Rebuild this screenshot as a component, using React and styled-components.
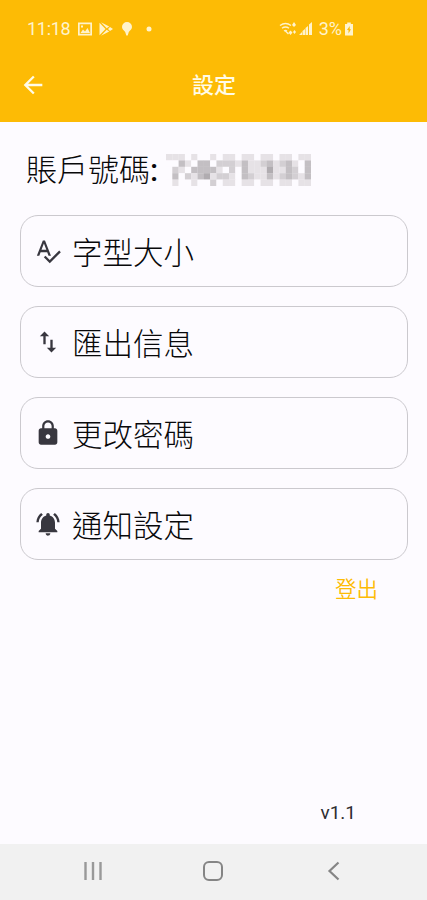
import styled, { createGlobalStyle } from "styled-components";

const GlobalStyle = createGlobalStyle`
  * {
    box-sizing: border-box;
  }

  body {
    margin: 0;
    background: #fdfbff;
    font-family: Roboto, "Noto Sans CJK TC", sans-serif;
  }
`;

const Screen = styled.div`
  width: 427px;
  height: 900px;
  display: flex;
  flex-direction: column;
  background: #fdfbff;
  color: #08080a;
  overflow: hidden;
`;

const Header = styled.header`
  height: 122px;
  background: #fdbb05;
  color: #fffbe8;
`;

const StatusBar = styled.div`
  height: 48px;
  padding: 9px 71px 0 27px;
  display: flex;
  align-items: center;
  justify-content: space-between;
  color: #fff3cc;
  font-size: 18px;
`;

const StatusGroup = styled.div`
  display: flex;
  align-items: center;
`;

const Clock = styled.span`
  width: 50px;
  letter-spacing: -0.3px;
`;

const Battery = styled.span`
  margin: 0 0 0 5px;
`;

const AppBar = styled.div`
  height: 72px;
  padding: 0 22px;
  display: grid;
  grid-template-columns: 44px 1fr 44px;
  align-items: center;
`;

const Title = styled.h1`
  margin: 2px 0 0 1px;
  font-size: 22px;
  font-weight: 500;
  line-height: 72px;
  text-align: center;
`;

const Content = styled.main`
  flex: 1;
  padding: 24px 19px 0 20px;
  display: flex;
  flex-direction: column;
`;

const Account = styled.div`
  height: 48px;
  padding-left: 6px;
  display: flex;
  align-items: center;
  font-size: 31px;
  font-weight: 300;
  line-height: 48px;
`;

const AccountLabel = styled.span`
  padding-top: 2px;
`;

const Colon = styled.span`
  font-weight: 500;
`;

const Menu = styled.div`
  margin-top: 21px;
  display: flex;
  flex-direction: column;
  gap: 19px;
`;

const MenuItem = styled.button`
  height: 72px;
  padding: 0 0 0 13px;
  display: flex;
  align-items: center;
  gap: 10px;
  border: 1px solid #cbc9ce;
  border-radius: 18px;
  background: transparent;
  color: #08080a;
  font-family: inherit;
  font-size: 30.5px;
  font-weight: 300;
`;

const MenuLabel = styled.span`
  padding-bottom: 1px;
`;

const Logout = styled.button`
  align-self: flex-end;
  height: 40px;
  margin: 7px 30px 0 0;
  padding: 0;
  border: none;
  background: transparent;
  color: #fdbb05;
  font-family: inherit;
  font-size: 21.5px;
  font-weight: 350;
`;

const Version = styled.div`
  align-self: flex-end;
  margin: auto 52px 19px 0;
  color: #2d2d31;
  font-size: 19px;
  line-height: 24px;
`;

const NavBar = styled.nav`
  height: 56px;
  padding: 0 33px 2px;
  display: grid;
  grid-template-columns: repeat(3, 1fr);
  place-items: center;
  background: #f1f1f1;
`;

const Icon = styled.svg`
  display: block;
  flex: none;
  width: ${(props) => props.$size || 28}px;
  height: ${(props) => props.$size || 28}px;
  margin-left: ${(props) => props.$left || 0}px;
  fill: ${(props) => props.$fill || "currentColor"};
`;

const Mosaic = styled.svg`
  display: block;
  margin-left: 8px;
`;

// one digit per tile, darker as it grows
const tiles = [
  "11101001011011011011011",
  "00310330222131123123103",
  "02103333102031114113203",
  "03021341221032113123213",
  "01001002011011011011011",
];
const shades = ["#fdfbff", "#e6e2e6", "#d3cfd3", "#c3bfc3", "#b0acb0"];

const HiddenNumber = () => (
  <Mosaic width="145" height="32" viewBox="0 0 23 5" preserveAspectRatio="none">
    {tiles.flatMap((row, y) =>
      [...row].map((level, x) => (
        <rect
          key={`${x}-${y}`}
          x={x}
          y={y}
          width="1.02"
          height="1.02"
          fill={shades[level]}
        />
      ))
    )}
  </Mosaic>
);

const menuItems = [
  {
    label: "字型大小",
    path: "M12.45 16h2.09L9.43 3H7.57L2.46 16h2.09l1.12-3h5.64l1.14 3zm-6.02-5L8.5 5.48 10.57 11H6.43zm15.16.59l-8.09 8.09L9.83 16l-1.41 1.41 5.09 5.09L23 13l-1.41-1.41z",
  },
  {
    label: "匯出信息",
    path: "M16 17.01V10h-2v7.01h-3L15 21l4-3.99h-3zM9 3L5 6.99h3V14h2V6.99h3L9 3z",
  },
  {
    label: "更改密碼",
    path: "M18 8h-1V6c0-2.76-2.24-5-5-5S7 3.24 7 6v2H6c-1.1 0-2 .9-2 2v10c0 1.1.9 2 2 2h12c1.1 0 2-.9 2-2V10c0-1.1-.9-2-2-2zm-6 9c-1.1 0-2-.9-2-2s.9-2 2-2 2 .9 2 2-.9 2-2 2zm3.1-9H8.9V6c0-1.71 1.39-3.1 3.1-3.1s3.1 1.39 3.1 3.1v2z",
  },
  {
    label: "通知設定",
    path: "M7.58 4.08L6.15 2.65C3.75 4.48 2.17 7.3 2.03 10.5h2c.15-2.65 1.51-4.97 3.55-6.42zm12.39 6.42h2c-.15-3.2-1.73-6.02-4.12-7.85l-1.42 1.43c2.02 1.45 3.39 3.77 3.54 6.42zM18 11c0-3.07-1.64-5.64-4.5-6.32V4c0-.83-.67-1.5-1.5-1.5s-1.5.67-1.5 1.5v.68C7.63 5.36 6 7.92 6 11v5l-2 2v1h16v-1l-2-2v-5zm-6 11c.14 0 .27-.01.4-.04.65-.14 1.18-.58 1.44-1.18.1-.24.15-.5.15-.78h-4c.01 1.1.9 2 2.01 2z",
  },
];

const App = () => (
  <Screen>
    <GlobalStyle />
    <Header>
      <StatusBar>
        <StatusGroup>
          <Clock>11:18</Clock>
          <Icon viewBox="0 0 16 16" $size={16}>
            <path
              fillRule="evenodd"
              d="M1 1.5h14v13H1zM2.7 3.2v9.6h10.6V3.2zM3.5 12l2.5-3.5 2 2 2.5-3.5 2.5 5zM4 4.5h2v2H4z"
            />
          </Icon>
          <Icon viewBox="0 0 16 16" $size={16} $left={5}>
            <path d="M1.5 1.8l6 6.2-6 6.2zM3 1.3L11.2 5.6 8.7 7.3zM3 14.7L11.2 10.4 8.7 8.7zM12 6L15 8l-3 2L10 8z" />
          </Icon>
          <Icon viewBox="0 0 16 16" $size={16} $left={5}>
            <path d="M8 1a5 5 0 0 0-5 5c0 2.2 1.9 3.2 3.2 5L7.3 14.5h1.4L9.8 11C11.1 9.2 13 8.2 13 6a5 5 0 0 0-5-5z" />
          </Icon>
          <Icon viewBox="0 0 6 6" $size={6} $left={11}>
            <circle cx="3" cy="3" r="2.5" />
          </Icon>
        </StatusGroup>
        <StatusGroup>
          <Icon viewBox="0 0 18 18" $size={18} $fill="none">
            <path
              d="M1 5.5q5.5-4 11 0M3 8.3q3.5-2.5 7 0M5 11q1.5-1 3 0M6.5 11l3 3"
              stroke="currentColor"
              strokeWidth="1.4"
            />
            <path
              d="M15 2l2 3-2 2-2-2zM11.5 15l-2-2.5 2-2 2 2zM15.5 14l-1.5-2 1.5-2 1.5 2z"
              fill="currentColor"
            />
          </Icon>
          <Icon viewBox="0 0 16 16" $size={16} $left={1}>
            <path d="M1 14l3-3v3zM4.5 14v-4l2.5-2v6zM7.5 14V7L10 5v9zM11 14V3.5L14 1v13z" />
          </Icon>
          <Battery>3%</Battery>
          <Icon viewBox="0 0 14 14" $size={14}>
            <path
              fillRule="evenodd"
              d="M5.2.5h3.6v1.5H11v11.5H3V2h2.2zM7.7 4L5 8h1.5v3.5L9 7.2H7.700z"
            />
          </Icon>
        </StatusGroup>
      </StatusBar>
      <AppBar>
        <Icon viewBox="0 0 24 24" $size={28} $left={-3}>
          <path d="M20 11H7.83l5.59-5.59L12 4l-8 8 8 8 1.41-1.41L7.83 13H20v-2z" />
        </Icon>
        <Title>設定</Title>
      </AppBar>
    </Header>
    <Content>
      <Account>
        <AccountLabel>
          賬戶號碼<Colon>:</Colon>
        </AccountLabel>
        <HiddenNumber />
      </Account>
      <Menu>
        {menuItems.map((item) => (
          <MenuItem key={item.label}>
            <Icon viewBox="0 0 24 24" $size={28} $fill="#38373f">
              <path d={item.path} />
            </Icon>
            <MenuLabel>{item.label}</MenuLabel>
          </MenuItem>
        ))}
      </Menu>
      <Logout>登出</Logout>
      <Version>v1.1</Version>
    </Content>
    <NavBar>
      <Icon viewBox="0 0 24 24" $size={24}>
        <path d="M4.5 3v18M12 3v18M19.5 3v18" stroke="#999" strokeWidth="2.4" />
      </Icon>
      <Icon viewBox="0 0 24 24" $size={24} $fill="none">
        <rect x="3" y="3" width="18" height="18" rx="5" stroke="#858585" strokeWidth="2" />
      </Icon>
      <Icon viewBox="0 0 24 24" $size={24} $fill="none">
        <path d="M16.5 3.5L7.5 12l9 8.5" stroke="#858585" strokeWidth="2.2" />
      </Icon>
    </NavBar>
  </Screen>
);

export default App;
